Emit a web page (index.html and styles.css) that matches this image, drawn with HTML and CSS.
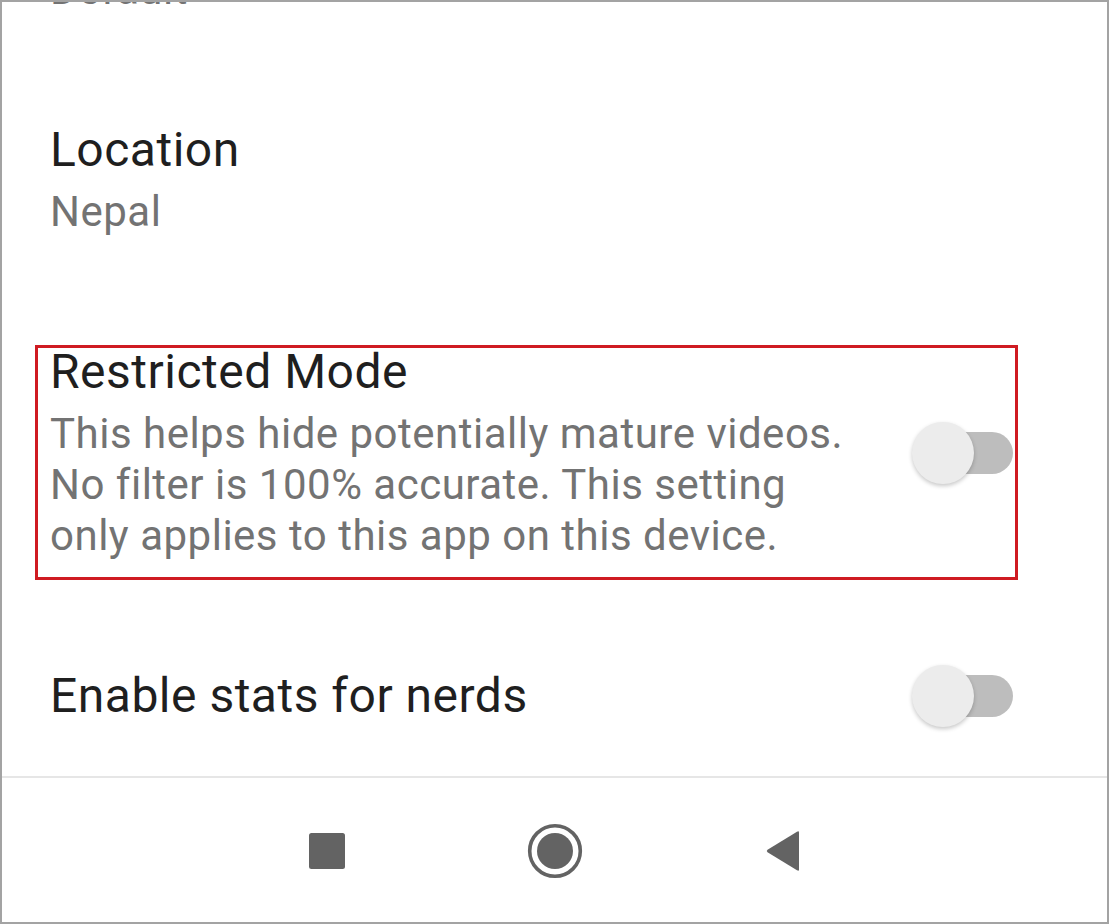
FILE: index.html
```html
<!DOCTYPE html>
<html lang="en">
<head>
<meta charset="utf-8">
<title>Settings</title>
<link rel="stylesheet" href="styles.css">
</head>
<body>
<div class="screen">
  <div class="list">
    <div class="item item-cut">
      <div class="item-text">
        <div class="item-sub">Default</div>
      </div>
    </div>
    <div class="item">
      <div class="item-text">
        <div class="item-title">Location</div>
        <div class="item-sub">Nepal</div>
      </div>
    </div>
    <div class="item item-marked">
      <div class="item-text">
        <div class="item-title">Restricted Mode</div>
        <div class="item-sub">This helps hide potentially mature videos.<br>No filter is 100% accurate. This setting<br>only applies to this app on this device.</div>
      </div>
      <div class="switch"></div>
      <div class="highlight"></div>
    </div>
    <div class="item">
      <div class="item-text">
        <div class="item-title">Enable stats for nerds</div>
      </div>
      <div class="switch"></div>
    </div>
  </div>
  <div class="navbar">
    <div class="nav-slot">
      <svg width="36" height="36" viewBox="0 0 36 36"><rect x="0" y="0" width="36" height="36" rx="2.5" fill="#636363"/></svg>
    </div>
    <div class="nav-slot">
      <svg width="56" height="56" viewBox="0 0 56 56"><circle cx="28" cy="28" r="25.3" fill="none" stroke="#636363" stroke-width="3.6"/><circle cx="28" cy="28" r="18" fill="#636363"/></svg>
    </div>
    <div class="nav-slot">
      <svg width="36" height="42" viewBox="0 0 36 42"><path d="M34 2.5 L34 39.5 Q34 41.5 32 40.3 L2.5 22.2 Q1 21 2.5 19.8 L32 1.7 Q34 0.5 34 2.5 Z" fill="#636363"/></svg>
    </div>
  </div>
</div>
</body>
</html>
```

FILE: styles.css
```css
html, body {
  margin: 0;
  padding: 0;
  background: #ffffff;
}

.screen {
  width: 1109px;
  height: 924px;
  box-sizing: border-box;
  border: 2px solid #a3a3a3;
  overflow: hidden;
  display: flex;
  flex-direction: column;
  font-family: Roboto, "Noto Sans", sans-serif;
  background: #ffffff;
}

.list {
  height: 774px;
  flex: none;
  overflow: hidden;
  border-bottom: 2px solid #e6e6e6;
}

.item {
  position: relative;
  display: flex;
  align-items: center;
  padding: 53px 94px 54px 48px;
}

.item-cut {
  margin-top: -91px;
  padding-top: 53px;
}

.item-text {
  flex: 1;
  min-width: 0;
}

.item-title {
  font-size: 48px;
  line-height: 56px;
  letter-spacing: 0.5px;
  color: #1f1f1f;
}

.item-sub {
  font-size: 42px;
  line-height: 51px;
  letter-spacing: 0.5px;
  color: #737373;
  margin-top: 8px;
}

.item-cut .item-sub {
  margin-top: 0;
}

.switch {
  position: relative;
  flex: none;
  width: 98px;
  height: 42px;
  border-radius: 21px;
  background: #bdbdbd;
  margin-left: 24px;
}

.switch::after {
  content: "";
  position: absolute;
  left: -3px;
  top: -10px;
  width: 62px;
  height: 62px;
  border-radius: 50%;
  background: #ececec;
  box-shadow: 0 2px 4px rgba(0, 0, 0, 0.22);
}

.highlight {
  position: absolute;
  left: 33px;
  top: 54px;
  width: 983px;
  height: 235px;
  box-sizing: border-box;
  border: 3px solid #cf1b22;
  pointer-events: none;
}

.navbar {
  flex: 1;
  display: flex;
  justify-content: center;
  align-items: center;
  padding-top: 2px;
}

.nav-slot {
  width: 228px;
  display: flex;
  justify-content: center;
  align-items: center;
}
```
